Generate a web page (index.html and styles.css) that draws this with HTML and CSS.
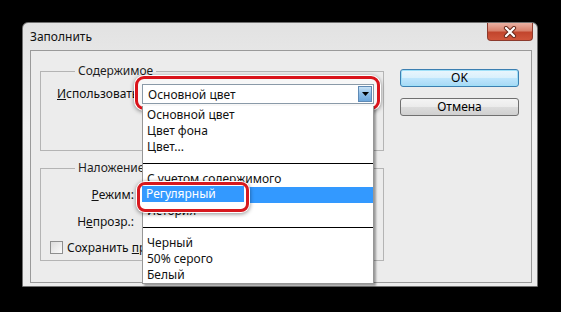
FILE: index.html
```html
<!DOCTYPE html>
<html lang="ru">
<head>
    <meta charset="UTF-8">
    <title>Заполнить</title>
    <link rel="stylesheet" href="styles.css">
</head>
<body>
    <div class="window">
        <div class="titlebar">
            <div class="title">Заполнить</div>
            <div class="close-btn">
                <svg width="14" height="12" viewBox="0 0 14 12">
                    <path d="M3 2 L11 10 M11 2 L3 10" stroke="#6b2a1e" stroke-width="4.2" stroke-linecap="round"/>
                    <path d="M3 2 L11 10 M11 2 L3 10" stroke="#ffffff" stroke-width="2.2" stroke-linecap="round"/>
                </svg>
            </div>
        </div>

        <div class="client">
            <div class="groups">
                <fieldset class="group group-content">
                    <legend>Содержимое</legend>
                    <div class="row">
                        <label class="label-use"><u>И</u>спользовать</label>
                        <div class="callout">
                            <div class="select">
                                <span class="select-value">Основной цвет</span>
                                <span class="select-arrow">
                                    <svg width="7" height="4" viewBox="0 0 7 4"><path d="M0 0 H7 L3.5 4 Z" fill="#000"/></svg>
                                </span>
                            </div>
                        </div>
                    </div>
                </fieldset>

                <fieldset class="group group-blend">
                    <legend>Наложение</legend>
                    <div class="field-row">
                        <label class="field-label"><u>Р</u>ежим:</label>
                    </div>
                    <div class="field-row">
                        <label class="field-label">Н<u>е</u>прозр.:</label>
                    </div>
                    <div class="check-row">
                        <span class="checkbox"></span>
                        <label class="check-label">Сохранить <u>п</u>розрачность</label>
                    </div>
                </fieldset>
            </div>

            <div class="buttons">
                <button class="button default">OK</button>
                <button class="button">Отмена</button>
            </div>
        </div>

        <ul class="dropdown">
            <li>Основной цвет</li>
            <li>Цвет фона</li>
            <li>Цвет...</li>
            <li class="sep"></li>
            <li>С учетом содержимого</li>
            <li class="selected">Регулярный</li>
            <li>История</li>
            <li class="sep"></li>
            <li>Черный</li>
            <li>50% серого</li>
            <li>Белый</li>
            <li class="callout-item"><span>Регулярный</span></li>
        </ul>
    </div>
</body>
</html>
```

FILE: styles.css
```css
body {
    margin: 0;
    width: 561px;
    height: 312px;
    padding: 22px 0 0 22px;
    box-sizing: border-box;
    background: #000;
    font-family: "Noto Sans", "Open Sans", sans-serif;
    font-size: 12px;
    color: #111;
    overflow: hidden;
}

.window {
    position: relative;
    width: 516px;
    height: 265px;
    box-sizing: border-box;
    border: 1px solid #707070;
    border-radius: 6px 6px 0 0;
    background: linear-gradient(to bottom, #e2e2e2, #f1f1f1 40%, #ececec);
    display: flex;
    flex-direction: column;
}

.titlebar {
    height: 27px;
    display: flex;
    align-items: center;
    justify-content: space-between;
    padding-left: 7px;
}

.title {
    line-height: 16px;
}

.close-btn {
    align-self: flex-start;
    width: 46px;
    height: 18px;
    margin-right: 4px;
    box-sizing: border-box;
    border: 1px solid #8c3a2c;
    border-top: none;
    border-radius: 0 0 4px 4px;
    background: linear-gradient(to bottom, #eab1a3, #d9826d 45%, #c2452d 55%, #d0553b);
    display: flex;
    align-items: center;
    justify-content: center;
}

.client {
    height: 233px;
    margin: 0 5px 3px 7px;
    box-sizing: border-box;
    border: 1px solid #9a9a9a;
    background: #ececec;
    padding-top: 12px;
    display: flex;
}

.groups {
    margin-left: 9px;
    width: 344px;
}

.group {
    margin: 0;
    padding: 0 0 0 16px;
    border: 1px solid #b4b4b4;
    min-width: 0;
    box-sizing: border-box;
}

.group legend {
    margin-left: 18px;
    padding: 0 3px;
    line-height: 16px;
    color: #1e1e1e;
}

.group-content {
    padding-bottom: 40px;
}

.row {
    display: flex;
    align-items: center;
    margin-top: -3px;
}

.label-use {
    width: 78px;
    flex-shrink: 0;
    white-space: nowrap;
}

.callout {
    position: relative;
    z-index: 1;
    width: 245px;
    height: 34px;
    box-sizing: border-box;
    border: 3px solid #d9141b;
    border-radius: 9px;
    background: #f7f7f7;
    padding: 5px 3px 3px 4px;
    box-shadow: 0 0 0 1px #fff, 0 1px 4px 1px rgba(0, 0, 0, 0.45);
}

.select {
    height: 20px;
    box-sizing: border-box;
    border: 1px solid #8a9aa8;
    background: #fff;
    display: flex;
    align-items: center;
    justify-content: space-between;
    padding: 0 1px 0 5px;
}

.select-arrow {
    width: 14px;
    height: 16px;
    box-sizing: border-box;
    border: 1px solid #5f8ab5;
    background: linear-gradient(to bottom, #c9e2f5, #8cbce6 50%, #6ea7dc);
    display: flex;
    align-items: center;
    justify-content: center;
}

.group-blend {
    margin-top: 9px;
    padding-bottom: 5px;
}

.field-row {
    display: flex;
    height: 16px;
    align-items: center;
    margin-top: 10px;
}

.field-row + .field-row {
    margin-top: 11px;
}

.field-label {
    width: 77px;
    text-align: right;
    white-space: nowrap;
}

.check-row {
    display: flex;
    align-items: center;
    height: 16px;
    margin: 10px 0 0 -7px;
    white-space: nowrap;
}

.checkbox {
    width: 13px;
    height: 13px;
    box-sizing: border-box;
    border: 1px solid #8e8f8f;
    background: linear-gradient(to bottom right, #dcdcdc, #fbfbfb);
    margin-right: 4px;
}

/* the open list hides the rest of this label */
.check-label {
    width: 76px;
    overflow: hidden;
}

.buttons {
    margin: 6px 0 0 16px;
    display: flex;
    flex-direction: column;
    gap: 11px;
}

.button {
    width: 119px;
    height: 18px;
    padding: 0;
    border: 1px solid #707070;
    border-radius: 3px;
    font-family: inherit;
    font-size: 12px;
    line-height: 14px;
    color: #000;
    background: linear-gradient(to bottom, #f4f4f4, #ebebeb 50%, #dcdcdc 51%, #d0d0d0);
}

.button.default {
    border-color: #3c7fb1;
    background: linear-gradient(to bottom, #eaf6fd, #d9f0fc 50%, #bee6fd 51%, #a7d9f5);
    box-shadow: inset 0 0 0 1px #9fe0f8;
}

.dropdown {
    position: absolute;
    left: 119px;
    top: 83px;
    width: 232px;
    margin: 0;
    padding: 0;
    list-style: none;
    box-sizing: border-box;
    border: 1px solid #979797;
    border-top: none;
    background: #fff;
    box-shadow: 2px 2px 2px rgba(0, 0, 0, 0.35);
    z-index: 2;
}

.dropdown li {
    height: 16px;
    line-height: 16px;
    padding-left: 4px;
    white-space: nowrap;
}

.dropdown li:first-child {
    margin-top: 1px;
}

.dropdown .sep {
    position: relative;
}

.dropdown .sep::after {
    content: "";
    position: absolute;
    left: 0;
    right: 0;
    top: 8px;
    border-top: 1px solid #000;
}

.dropdown .selected {
    background: #3399ff;
    color: #fff;
}

.dropdown .callout-item {
    position: absolute;
    left: -6px;
    top: 76px;
    width: 112px;
    height: 30px;
    padding: 1px 2px 7px 2px;
    box-sizing: border-box;
    border: 3px solid #d7191f;
    border-radius: 8px;
    background: #fff;
    box-shadow: 0 0 0 1px #fff, 0 1px 4px 1px rgba(0, 0, 0, 0.45);
}

.callout-item span {
    display: block;
    height: 16px;
    padding-left: 4px;
    background: #3399ff;
    color: #fff;
}
```
